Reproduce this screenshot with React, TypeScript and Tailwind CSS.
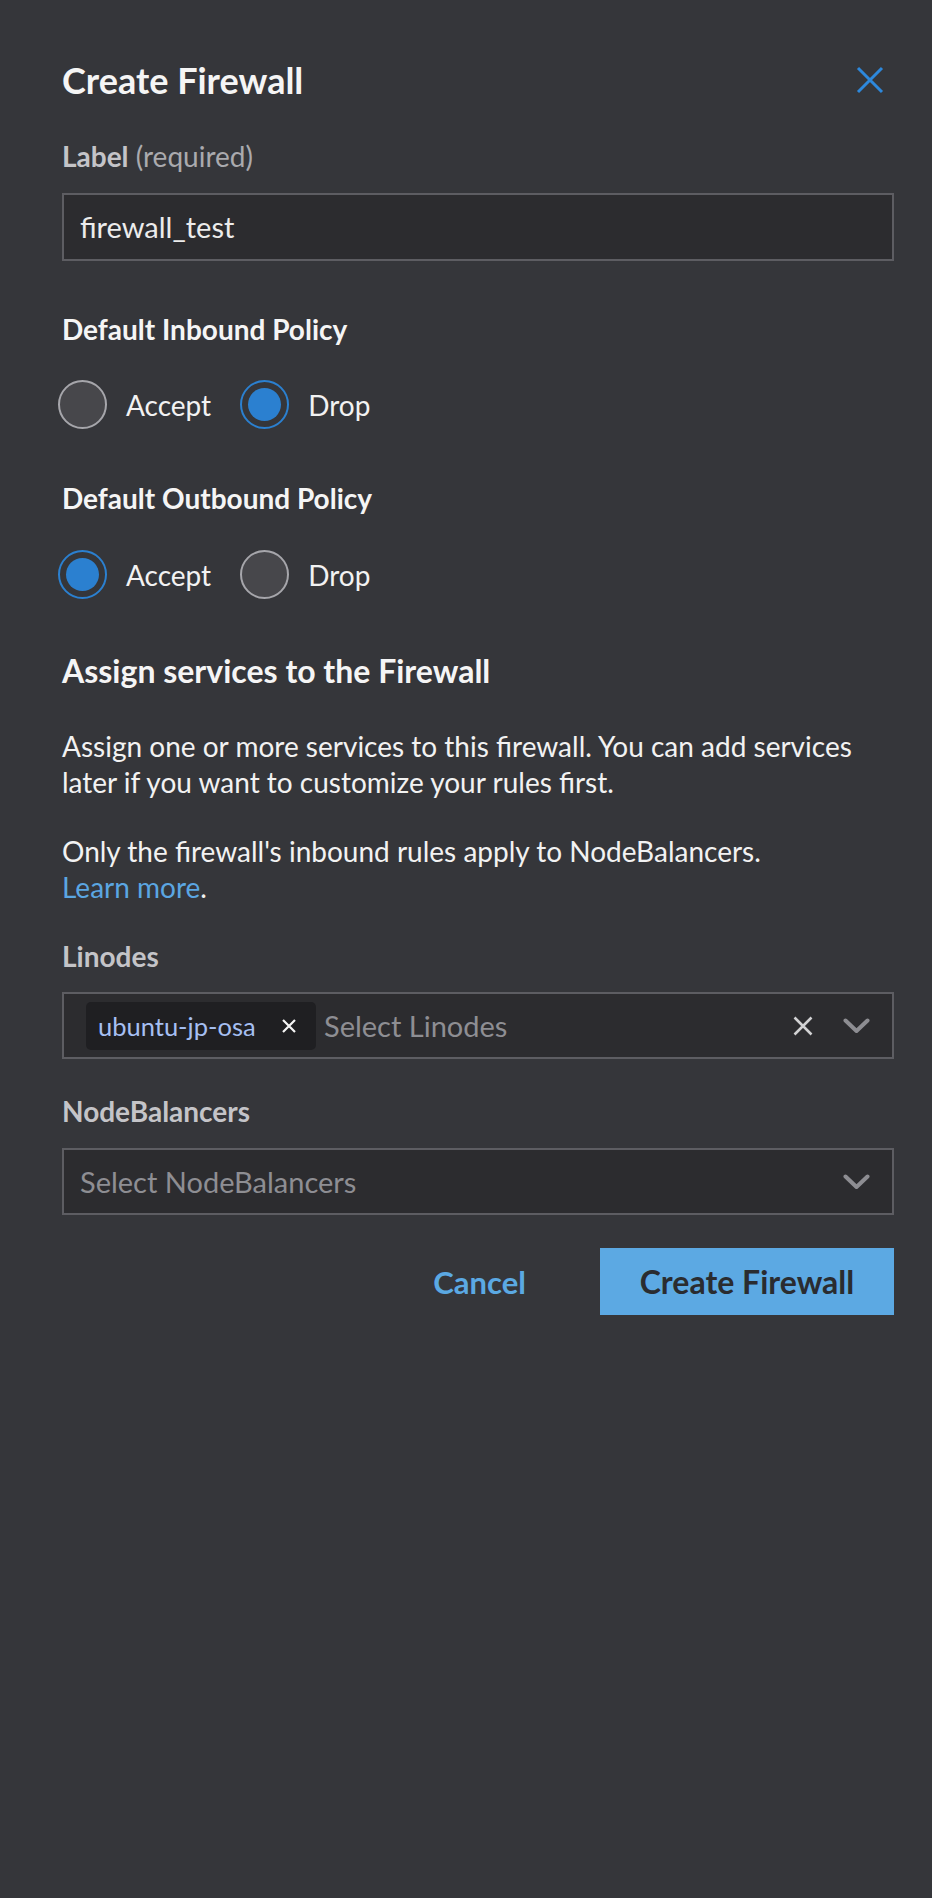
import React from "react";

function Radio({ checked }: { checked: boolean }) {
  if (checked) {
    return (
      <span className="flex h-[49px] w-[49px] items-center justify-center rounded-full border-2 border-[#2b80d0] bg-[#35363a]">
        <span className="h-[33px] w-[33px] rounded-full bg-[#2b80d0]" />
      </span>
    );
  }
  return <span className="block h-[49px] w-[49px] rounded-full border-2 border-[#a6a6ab] bg-[#47474b]" />;
}

function RadioRow({ value }: { value: "accept" | "drop" }) {
  return (
    <div className="ml-[-4px] flex items-center gap-[29px]">
      <label className="flex items-center gap-[19px]">
        <Radio checked={value === "accept"} />
        <span className="text-[28px] leading-[32px] text-[#f2f2f2]">Accept</span>
      </label>
      <label className="flex items-center gap-[19px]">
        <Radio checked={value === "drop"} />
        <span className="text-[28px] leading-[32px] text-[#f2f2f2]">Drop</span>
      </label>
    </div>
  );
}

function Chevron() {
  return (
    <svg width="27" height="16" viewBox="0 0 27 16" fill="none">
      <path d="M2.5 2.5 L13.5 13 L24.5 2.5" stroke="#8d8d92" strokeWidth="4" strokeLinecap="round" strokeLinejoin="round" />
    </svg>
  );
}

export default function App() {
  return (
    <div className="min-h-[1898px] w-full bg-[#35363a] pl-[62px] pr-[38px] pt-[58px] font-['Lato',sans-serif]">
      <div className="flex h-[44px] items-center justify-between">
        <h1 className="text-[36px] font-bold leading-[44px] text-[#f5f5f5]">Create Firewall</h1>
        <svg className="mr-[10px]" width="28" height="28" viewBox="0 0 28 28" fill="none">
          <path d="M2 2 L26 26 M26 2 L2 26" stroke="#2d88dc" strokeWidth="3" />
        </svg>
      </div>

      <div className="mt-[38px] text-[28px] leading-[32px]">
        <span className="font-bold text-[#c4c4c8]">Label</span>{" "}
        <span className="text-[#aaaaae]">(required)</span>
      </div>
      <div className="mt-[21px] flex h-[68px] items-center border-2 border-[#5d5d62] bg-[#2c2c2f] px-[16px] text-[29px] text-[#ececec]">
        firewall_test
      </div>

      <h2 className="mt-[52px] text-[28px] font-bold leading-[32px] text-[#f5f5f5]">Default Inbound Policy</h2>
      <div className="mt-[35px]">
        <RadioRow value="drop" />
      </div>

      <h2 className="mt-[53px] text-[28px] font-bold leading-[32px] text-[#f5f5f5]">Default Outbound Policy</h2>
      <div className="mt-[36px]">
        <RadioRow value="accept" />
      </div>

      <h2 className="mt-[54px] text-[32px] font-bold leading-[36px] text-[#f5f5f5]">Assign services to the Firewall</h2>
      <p className="mt-[39px] text-[28px] leading-[36px] text-[#f2f2f2]">
        Assign one or more services to this firewall. You can add services later if you want to customize your rules first.
      </p>
      <p className="mt-[33px] text-[28px] leading-[36px] text-[#f2f2f2]">
        Only the firewall's inbound rules apply to NodeBalancers.
        <br />
        <a className="text-[#5ba6e2]">Learn more</a>.
      </p>

      <div className="mt-[35px] text-[28px] font-bold leading-[32px] text-[#c4c4c8]">Linodes</div>
      <div className="mt-[20px] flex h-[67px] items-center border-2 border-[#5d5d62] bg-[#2c2c2f] pl-[22px] pr-[22px]">
        <div className="flex h-[48px] w-[230px] items-center justify-between rounded-[5px] bg-[#1f1f22] pl-[12px] pr-[20px]">
          <span className="text-[25.5px] leading-[32px] text-[#a6bff2]">ubuntu-jp-osa</span>
          <svg width="14" height="14" viewBox="0 0 14 14" fill="none">
            <path d="M1 1 L13 13 M13 1 L1 13" stroke="#f5f5f5" strokeWidth="2.2" />
          </svg>
        </div>
        <span className="ml-[8px] flex-1 text-[29px] leading-[32px] text-[#8e8e93]">Select Linodes</span>
        <svg className="mr-[30px]" width="20" height="20" viewBox="0 0 20 20" fill="none">
          <path d="M1.5 1.5 L18.5 18.5 M18.5 1.5 L1.5 18.5" stroke="#d2d2d4" strokeWidth="2.5" />
        </svg>
        <Chevron />
      </div>

      <div className="mt-[36px] text-[28px] font-bold leading-[32px] text-[#c4c4c8]">NodeBalancers</div>
      <div className="mt-[21px] flex h-[67px] items-center border-2 border-[#5d5d62] bg-[#2c2c2f] pl-[16px] pr-[22px]">
        <span className="flex-1 text-[29px] leading-[32px] text-[#8e8e93]">Select NodeBalancers</span>
        <Chevron />
      </div>

      <div className="mt-[33px] flex items-center justify-end">
        <button className="mr-[74px] text-[31px] font-bold leading-[36px] text-[#5ba9e3]">Cancel</button>
        <button className="h-[67px] w-[294px] bg-[#5ca9e3] text-[32px] font-bold text-[#2a2c30]">Create Firewall</button>
      </div>
    </div>
  );
}
